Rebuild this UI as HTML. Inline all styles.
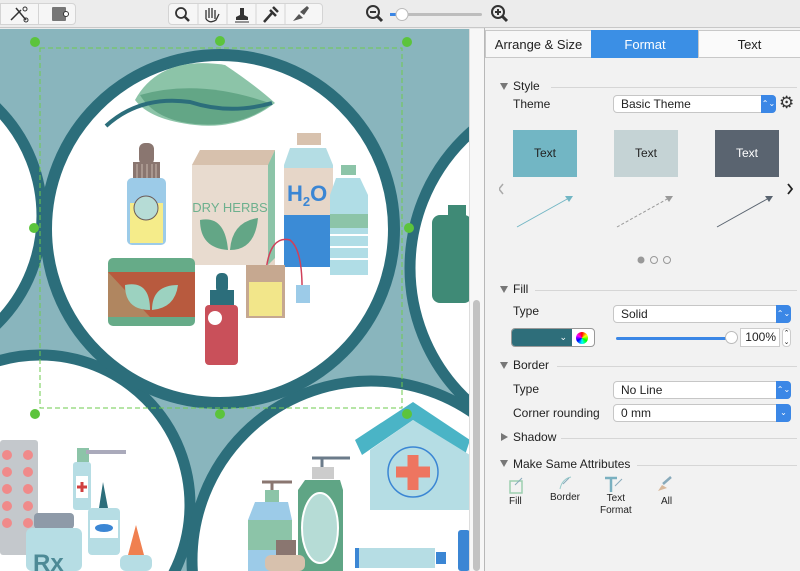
<!DOCTYPE html>
<html style="width:800px;height:571px;overflow:hidden"><head><meta charset="utf-8"><style>
*{margin:0;padding:0;box-sizing:border-box}
body{width:800px;height:571px;overflow:hidden;background:#ececec;font-family:"Liberation Sans",sans-serif;position:relative;font-size:12px;color:#222}
.abs{position:absolute}
.tb{position:absolute;top:0;left:0;width:800px;height:28px;background:#ececec;border-bottom:1px solid #c8c8c8}
.btn{position:absolute;top:3px;height:22px;background:#f6f6f6;border:1px solid #d4d4d4;border-radius:4px}
.panel{position:absolute;left:484px;top:28px;width:316px;height:543px;background:#f2f2f2;border-left:1px solid #b8b8b8;overflow:hidden}
.tab{position:absolute;top:2px;height:28px;line-height:28px;text-align:center;font-size:13px;border:1px solid #c8c8c8;background:#f7f7f7}
.lbl{position:absolute;font-size:12px}
.sel{position:absolute;height:18px;background:#fff;border:1px solid #c6c6c6;border-radius:4px;font-size:12px;line-height:16px;padding-left:7px}
.sel b{position:absolute;right:-1px;top:-1px;width:15px;height:18px;background:#3b87e6;border-radius:0 4px 4px 0;color:#fff;font-size:8px;line-height:18px;text-align:center;font-weight:normal}
.hdr{position:absolute;font-size:12px}
.hline{position:absolute;height:1px;background:#d6d6d6}
.tri{position:absolute;width:0;height:0;border-left:4px solid transparent;border-right:4px solid transparent;border-top:7px solid #777}
</style></head><body>
<div class="tb">
 <div class="btn" style="left:0;width:76px;border-radius:0 4px 4px 0"></div>
 <div class="abs" style="left:38px;top:3px;width:1px;height:22px;background:#d4d4d4"></div>
 <svg class="abs" style="left:8px;top:4px" width="64" height="20"><path d="M3 16 L13 6 M8 4 L18 16" stroke="#333" stroke-width="1.5" fill="none"/><circle cx="17" cy="5" r="2" fill="none" stroke="#333"/><circle cx="18" cy="16" r="2" fill="none" stroke="#333"/><rect x="44" y="3" width="14" height="14" rx="1" fill="#777"/><circle cx="58" cy="10" r="2.5" fill="#fff" stroke="#333"/></svg>
 <div class="btn" style="left:168px;width:155px"></div>
 <svg class="abs" style="left:168px;top:3px" width="155" height="22"><g stroke="#d4d4d4"><line x1="30" y1="0" x2="30" y2="22"/><line x1="59" y1="0" x2="59" y2="22"/><line x1="88" y1="0" x2="88" y2="22"/><line x1="117" y1="0" x2="117" y2="22"/></g>
 <circle cx="13" cy="10" r="5" fill="none" stroke="#333" stroke-width="1.8"/><line x1="17" y1="14" x2="21" y2="18" stroke="#333" stroke-width="2.5"/>
 <path d="M38 16 L38 7 M41 15 L41 5 M44 15 L44 5 M47 16 L47 7 M38 16 Q42 21 48 17 L51 11" stroke="#333" fill="none" stroke-width="1.3"/>
 <path d="M68 17 L80 17 L80 14 L76 12 L76 5 L72 5 L72 12 L68 14 Z" fill="#333"/><line x1="67" y1="19" x2="81" y2="19" stroke="#333"/>
 <path d="M96 19 L104 10 M102 7 L108 13 M105 4 L110 9" stroke="#333" stroke-width="2.5" fill="none"/>
 <path d="M125 18 L131 11 L135 15 Z M132 9 L139 3 L141 5 L136 12" fill="#555"/></svg>
 <svg class="abs" style="left:364px;top:3px" width="150" height="22"><circle cx="9" cy="9" r="6" fill="none" stroke="#333" stroke-width="2"/><line x1="6" y1="9" x2="12" y2="9" stroke="#333" stroke-width="2"/><line x1="13" y1="13" x2="18" y2="18" stroke="#333" stroke-width="3"/>
 <rect x="26" y="10" width="92" height="3" rx="1.5" fill="#bdbdbd"/><rect x="26" y="10" width="10" height="3" fill="#3b87e6"/><circle cx="38" cy="11.5" r="6" fill="#fff" stroke="#bbb"/>
 <circle cx="134" cy="9" r="6" fill="none" stroke="#333" stroke-width="2"/><path d="M131 9 H137 M134 6 V12" stroke="#333" stroke-width="2"/><line x1="138" y1="13" x2="143" y2="18" stroke="#333" stroke-width="3"/></svg>
</div>

<svg class="abs" style="left:0;top:29px;overflow:hidden" width="484" height="542" viewBox="0 29 484 542">
 <rect x="0" y="29" width="470" height="542" fill="#89b5bd"/>
 <ellipse cx="560" cy="-130" rx="190" ry="175" fill="#fff"/>
 <g fill="#fff" stroke="#2c6e7b" stroke-width="11">
  <circle cx="-110" cy="216" r="152"/>
  <circle cx="592" cy="268" r="182"/>
  <circle cx="40" cy="505" r="150"/>
  <circle cx="371" cy="560" r="179"/>
  <circle cx="220" cy="229" r="174" stroke-width="12"/>
 </g>
 <path d="M135 100 Q160 55 225 65 Q255 85 275 103 Q240 130 195 125 Q150 120 135 100Z" fill="#8cc4a8"/>
 <path d="M140 95 Q200 78 272 104 Q240 128 195 124 Q155 120 140 95Z" fill="#63a686"/>
 <path d="M106 126 Q140 95 190 102 Q230 115 272 103" stroke="#2c6e7b" stroke-width="4" fill="none"/>
 <rect x="139" y="143" width="15" height="22" rx="6" fill="#8a7670"/>
 <rect x="133" y="162" width="27" height="16" fill="#8a7670"/><path d="M137 164 V178 M142 164 V178 M147 164 V178 M152 164 V178 M156 164V178" stroke="#c8b8ae"/>
 <rect x="127" y="178" width="39" height="67" rx="5" fill="#9ccbe8"/><rect x="130" y="203" width="33" height="40" fill="#f5ec8a"/>
 <circle cx="146" cy="208" r="12" fill="#b6dcd6" stroke="#6b5b58"/>
 <path d="M192 165 L200 150 L275 150 L275 265 L268 265 L192 265Z" fill="#e6d6c8"/>
 <rect x="192" y="165" width="76" height="100" fill="#e8dbcf"/><path d="M192 165 L200 150 L275 150 L268 165Z" fill="#d7c1ad"/>
 <path d="M268 165 L275 150 L275 258 L268 265Z" fill="#8cc4a8"/>
 <text x="230" y="212" font-size="13" text-anchor="middle" fill="#6db08e" font-family="Liberation Sans">DRY HERBS</text>
 <path d="M200 220 Q225 215 228 250 Q200 248 200 220Z M258 218 Q232 222 230 250 Q255 250 258 218Z" fill="#63a686"/>
 <rect x="297" y="133" width="24" height="12" fill="#d8c2ae"/>
 <path d="M290 148 L326 148 L333 165 L333 265 L284 265 L284 165Z" fill="#b4dde4"/>
 <rect x="284" y="168" width="49" height="48" fill="#e6d6c8"/><rect x="284" y="215" width="49" height="52" fill="#3b8bd6"/>
 <text x="287" y="201" font-size="22" font-weight="bold" fill="#3b86d4" font-family="Liberation Sans">H<tspan font-size="13" dy="5">2</tspan><tspan dy="-5">O</tspan></text>
 <rect x="341" y="165" width="15" height="10" fill="#8cc4a8"/>
 <path d="M336 178 L360 178 L368 195 L368 275 L330 275 L330 195Z" fill="#b0dde6"/><rect x="330" y="214" width="38" height="14" fill="#8cc4a8"/>
 <path d="M330 235 H368 M330 247 H368 M330 259 H368" stroke="#fff" stroke-width="2"/>
 <rect x="108" y="258" width="87" height="68" rx="5" fill="#66ab88"/><rect x="108" y="272" width="87" height="45" fill="#b85a3e"/><path d="M108 272 L150 317 L108 317Z" fill="#b08660"/>
 <path d="M125 285 Q150 280 150 310 Q125 310 125 285Z M178 285 Q152 285 152 310 Q175 308 178 285Z" fill="#9cd2c0"/>
 <rect x="216" y="273" width="12" height="20" rx="5" fill="#2c6e7b"/><rect x="210" y="290" width="24" height="15" fill="#2c6e7b"/>
 <rect x="205" y="305" width="33" height="60" rx="4" fill="#c9505a"/><circle cx="215" cy="318" r="7" fill="#fff"/>
 <path d="M266 271 Q270 235 290 240 Q303 250 302 295" stroke="#d0405a" stroke-width="1.5" fill="none"/>
 <rect x="246" y="265" width="39" height="53" fill="#c6a890"/><rect x="249" y="282" width="33" height="34" fill="#f2e68a"/>
 <rect x="296" y="285" width="14" height="18" fill="#9ccbe8"/>
 <rect x="432" y="215" width="40" height="88" rx="8" fill="#3f8a76"/><rect x="448" y="205" width="18" height="14" fill="#3f8a76"/>
 <rect x="0" y="440" width="38" height="115" rx="3" fill="#c4c8cc"/>
 <g fill="#f08a8a"><circle cx="7" cy="455" r="5"/><circle cx="28" cy="455" r="5"/><circle cx="7" cy="472" r="5"/><circle cx="28" cy="472" r="5"/><circle cx="7" cy="489" r="5"/><circle cx="28" cy="489" r="5"/><circle cx="7" cy="506" r="5"/><circle cx="28" cy="506" r="5"/><circle cx="7" cy="523" r="5"/><circle cx="28" cy="523" r="5"/></g>
 <rect x="77" y="448" width="12" height="14" fill="#8cc4a8"/><rect x="86" y="450" width="40" height="4" fill="#aab"/>
 <rect x="73" y="462" width="18" height="48" rx="3" fill="#b6dde4"/><rect x="76" y="476" width="12" height="22" fill="#fff"/><path d="M82 482 V492 M77 487 H87" stroke="#d04040" stroke-width="3"/>
 <path d="M103 482 L99 508 L108 508Z" fill="#2c6e7b"/><rect x="88" y="508" width="32" height="47" rx="4" fill="#b6dde4"/><rect x="90" y="520" width="28" height="18" fill="#fff"/><ellipse cx="104" cy="528" rx="9" ry="4" fill="#3b86d4"/>
 <rect x="34" y="513" width="40" height="16" rx="4" fill="#8e9aa8"/><rect x="26" y="528" width="56" height="43" rx="6" fill="#b6dde4"/>
 <text x="33" y="571" font-size="24" font-weight="bold" fill="#4d8a96" font-family="Liberation Sans">Rx</text>
 <path d="M136 525 L128 555 L144 555Z" fill="#f08050"/><rect x="120" y="555" width="32" height="16" rx="6" fill="#b6dde4"/>
 <path d="M355 440 L413 402 L470 440 L465 455 L413 420 L362 455Z" fill="#4ab4c6"/>
 <path d="M370 450 L413 420 L470 455 L470 510 L370 510Z" fill="#b5dde4"/>
 <circle cx="413" cy="472" r="25" fill="none" stroke="#3b86d4" stroke-width="1.5"/><path d="M413 455 V490 M396 472 H430" stroke="#ee7560" stroke-width="11"/>
 <path d="M262 482 H292 M272 482 V492" stroke="#8a7670" stroke-width="3"/><rect x="265" y="490" width="14" height="12" fill="#8cc4a8"/>
 <path d="M255 502 L288 502 L292 520 L292 571 L248 571 L248 520Z" fill="#9ccbe8"/><rect x="248" y="520" width="44" height="30" fill="#8cc4a8"/>
 <path d="M312 458 H350 M322 458 V470" stroke="#6b7b8a" stroke-width="3"/><rect x="312" y="467" width="22" height="12" fill="#ccc"/>
 <path d="M305 480 L340 480 L343 490 L343 571 L298 571 L298 490Z" fill="#5fa585"/><ellipse cx="320" cy="528" rx="18" ry="35" fill="#b6dcd6" stroke="#fff" stroke-width="2"/>
 <rect x="276" y="540" width="20" height="20" fill="#8a7670"/><rect x="265" y="555" width="40" height="16" rx="6" fill="#d7c1ad"/>
 <rect x="355" y="548" width="80" height="20" fill="#b6dde4"/><rect x="355" y="548" width="4" height="20" fill="#3b86d4"/><rect x="436" y="552" width="10" height="12" fill="#3b86d4"/>
 <rect x="458" y="530" width="12" height="41" rx="3" fill="#3b86d4"/>
 <rect x="40" y="48" width="362" height="360" fill="none" stroke="#6ecb4e" stroke-dasharray="5 3" stroke-width="1"/>
 <g fill="#5cc43c"><circle cx="35" cy="42" r="5"/><circle cx="220" cy="41" r="5"/><circle cx="407" cy="42" r="5"/><circle cx="34" cy="228" r="5"/><circle cx="409" cy="228" r="5"/><circle cx="35" cy="414" r="5"/><circle cx="220" cy="414" r="5"/><circle cx="407" cy="414" r="5"/></g>
 <rect x="469" y="29" width="15" height="542" fill="#f7f7f7"/><line x1="469.5" y1="29" x2="469.5" y2="571" stroke="#ddd"/>
 <rect x="473" y="300" width="7" height="271" rx="3.5" fill="#c2c2c2"/>
</svg>

<div class="panel">
 <div class="tab" style="left:0;width:107px">Arrange &amp; Size</div>
 <div class="tab" style="left:106px;width:108px;background:#3b8fe5;color:#fff;border-color:#3b8fe5">Format</div>
 <div class="tab" style="left:213px;width:103px;background:#fafafa">Text</div>

 <div class="tri" style="left:15px;top:55px"></div><div class="hdr" style="left:28px;top:51px">Style</div><div class="hline" style="left:66px;top:59px;width:246px"></div>
 <div class="lbl" style="left:28px;top:69px">Theme</div>
 <div class="sel" style="left:128px;top:67px;width:163px">Basic Theme<b>⌃⌄</b></div>
 <div class="abs" style="left:294px;top:65px;font-size:17px;color:#333">⚙</div>
 <div class="abs" style="left:28px;top:102px;width:64px;height:47px;background:#72b6c4;text-align:center;line-height:47px">Text</div>
 <div class="abs" style="left:129px;top:102px;width:64px;height:47px;background:#c5d3d5;text-align:center;line-height:47px">Text</div>
 <div class="abs" style="left:230px;top:102px;width:64px;height:47px;background:#5a6470;color:#fff;text-align:center;line-height:47px">Text</div>
 <svg class="abs" style="left:14px;top:148px" width="300" height="90">
  <path d="M4 8 L0 13 L4 18" stroke="#aaa" stroke-width="1.5" fill="none"/><path d="M289 8 L293 13 L289 18" stroke="#222" stroke-width="1.8" fill="none"/>
  <line x1="18" y1="51" x2="70" y2="22" stroke="#72b6c4"/><path d="M74 20 L66 20 L70 26Z" fill="#72b6c4"/>
  <line x1="118" y1="51" x2="170" y2="22" stroke="#999" stroke-dasharray="3 2"/><path d="M174 20 L166 20 L170 26Z" fill="#999"/>
  <line x1="218" y1="51" x2="270" y2="22" stroke="#5a6470"/><path d="M274 20 L266 20 L270 26Z" fill="#5a6470"/>
  <circle cx="142" cy="84" r="3.5" fill="#999"/><circle cx="155" cy="84" r="3.5" fill="none" stroke="#999"/><circle cx="168" cy="84" r="3.5" fill="none" stroke="#999"/>
 </svg>

 <div class="tri" style="left:15px;top:258px"></div><div class="hdr" style="left:28px;top:254px">Fill</div><div class="hline" style="left:50px;top:262px;width:262px"></div>
 <div class="lbl" style="left:28px;top:276px">Type</div>
 <div class="sel" style="left:128px;top:277px;width:178px">Solid<b>⌃⌄</b></div>
 <div class="abs" style="left:26px;top:300px;width:84px;height:19px;border:1px solid #999;border-radius:4px;background:#fff;overflow:hidden"><div style="width:60px;height:19px;background:#2e6e7a;color:#fff;font-size:9px;text-align:right;padding-right:5px;line-height:17px">⌄</div></div>
 <div class="abs" style="left:91px;top:304px;width:12px;height:12px;border-radius:50%;background:conic-gradient(red,yellow,lime,cyan,blue,magenta,red)"></div>
 <div class="abs" style="left:131px;top:309px;width:116px;height:3px;background:#3b87e6;border-radius:2px"></div>
 <div class="abs" style="left:240px;top:303px;width:13px;height:13px;border-radius:50%;background:#fff;border:1px solid #bbb"></div>
 <div class="abs" style="left:255px;top:300px;width:40px;height:19px;background:#fff;border:1px solid #ccc;font-size:12px;line-height:17px;text-align:right;padding-right:3px">100%</div>
 <div class="abs" style="left:297px;top:300px;width:9px;height:19px;border:1px solid #ccc;border-radius:4px;background:#fff;font-size:7px;line-height:9px;text-align:center">⌃<br>⌄</div>

 <div class="tri" style="left:15px;top:334px"></div><div class="hdr" style="left:28px;top:330px">Border</div><div class="hline" style="left:72px;top:338px;width:240px"></div>
 <div class="lbl" style="left:28px;top:354px">Type</div>
 <div class="sel" style="left:128px;top:353px;width:178px">No Line<b>⌃⌄</b></div>
 <div class="lbl" style="left:28px;top:378px">Corner rounding</div>
 <div class="sel" style="left:128px;top:376px;width:178px">0 mm<b>⌄</b></div>

 <div class="abs" style="left:16px;top:405px;width:0;height:0;border-top:4px solid transparent;border-bottom:4px solid transparent;border-left:7px solid #777"></div>
 <div class="hdr" style="left:28px;top:402px">Shadow</div><div class="hline" style="left:76px;top:410px;width:236px"></div>
 <div class="tri" style="left:15px;top:432px"></div><div class="hdr" style="left:28px;top:429px">Make Same Attributes</div><div class="hline" style="left:152px;top:437px;width:160px"></div>
 <svg class="abs" style="left:20px;top:446px" width="180" height="22">
  <rect x="5" y="7" width="12" height="12" fill="none" stroke="#9ccfb0" stroke-width="1.5"/><line x1="10" y1="11" x2="17" y2="4" stroke="#8ab"/>
  <path d="M55 15 Q57 5 66 3" stroke="#9cc" fill="none"/><line x1="58" y1="10" x2="64" y2="4" stroke="#8ab"/>
  <path d="M100 4 H112 M106 4 V18" stroke="#7ab0c0" stroke-width="2.5"/><line x1="110" y1="12" x2="117" y2="5" stroke="#8ab"/>
  <path d="M153 17 L157 11 L162 14 Z" fill="#d8b89a"/><line x1="158" y1="10" x2="166" y2="3" stroke="#8ab" stroke-width="2.5"/>
 </svg>
 <div class="abs" style="left:24px;top:468px;font-size:10px">Fill</div>
 <div class="abs" style="left:65px;top:464px;font-size:10px">Border</div>
 <div class="abs" style="left:115px;top:465px;font-size:10px;text-align:center;line-height:12px">Text<br>Format</div>
 <div class="abs" style="left:176px;top:468px;font-size:10px">All</div>
</div>
</body></html>
